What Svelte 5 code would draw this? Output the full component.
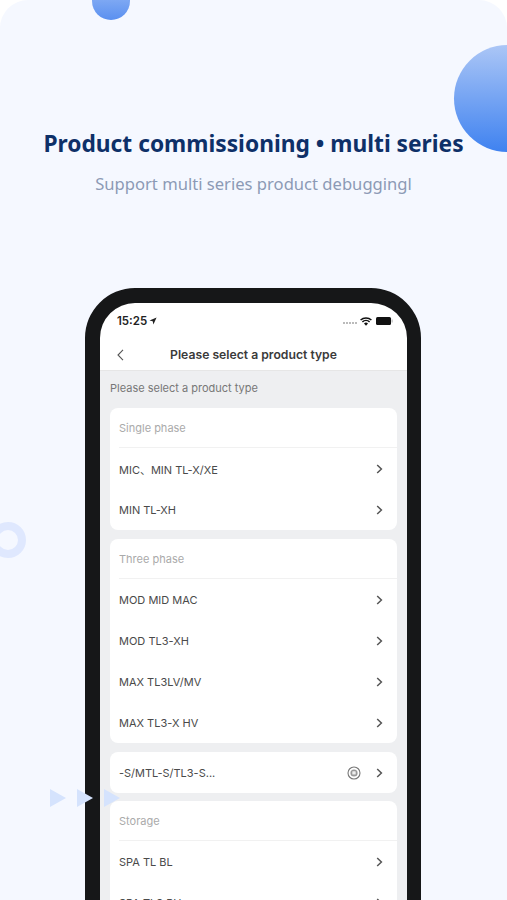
<script>
	const groups = [
		{ title: 'Single phase', items: ['MIC、MIN TL-X/XE', 'MIN TL-XH'] },
		{ title: 'Three phase', items: ['MOD MID MAC', 'MOD TL3-XH', 'MAX TL3LV/MV', 'MAX TL3-X HV'] },
		{ items: ['-S/MTL-S/TL3-S...'], badge: true },
		{ title: 'Storage', items: ['SPA TL BL', 'SPA TL3 BH'] }
	];
</script>

<div class="page">
	<span class="dot top"></span>
	<span class="dot right"></span>
	<span class="ring"></span>

	<header class="intro">
		<h1>Product commissioning • multi series</h1>
		<p>Support multi series product debuggingl</p>
	</header>

	<div class="phone">
		<div class="screen">
			<div class="status">
				<span class="time">15:25</span>
				<svg class="arrow" width="8" height="8" viewBox="0 0 8 8"><path d="M7.6.4 .5 3.6l3.2.7.7 3.3z" fill="#222"/></svg>
				<span class="signal"></span>
				<svg width="12" height="9" viewBox="0 0 12 9">
					<path d="M.6 3a8 8 0 0 1 10.8 0M2.4 4.9a5.4 5.4 0 0 1 7.2 0" fill="none" stroke="#111" stroke-width="1.5"/>
					<path d="M4 6.5a3 3 0 0 1 4 0L6 8.8z" fill="#111"/>
				</svg>
				<svg class="battery" width="17" height="8" viewBox="0 0 17 8">
					<rect width="15" height="8" rx="1.5" fill="#111"/>
					<rect x="15.5" y="2.5" width="1.2" height="3" fill="#bbb"/>
				</svg>
			</div>
			<nav class="bar">
				<svg class="back" width="7" height="12" viewBox="0 0 7 12"><path d="M6 .8 1 6l5 5.2" fill="none" stroke="#555" stroke-width="1.1"/></svg>
				<span>Please select a product type</span>
			</nav>
			<div class="content">
				<div class="hint">Please select a product type</div>
				{#each groups as group}
					<section class="card">
						{#if group.title}
							<div class="head">{group.title}</div>
						{/if}
						{#each group.items as item}
							<div class="row">
								<span class="name">{item}</span>
								{#if group.badge}
									<svg class="badge" width="14" height="14" viewBox="0 0 14 14">
										<circle cx="7" cy="7" r="6" fill="none" stroke="#777" stroke-width="1.1"/>
										<circle cx="7" cy="7" r="3.6" fill="#999"/>
										<rect x="5.3" y="5.2" width="3.4" height="3.4" rx=".6" fill="#eee"/>
									</svg>
								{/if}
								<svg width="7" height="10" viewBox="0 0 7 10"><path d="M1.2 1 5.4 5 1.2 9" fill="none" stroke="#555" stroke-width="1.5"/></svg>
							</div>
						{/each}
					</section>
				{/each}
			</div>
		</div>
	</div>

	<div class="arrows">
		<i></i><i></i><i></i>
	</div>
</div>

<style>
	:global(body) {
		background: #fff;
	}

	.page {
		position: relative;
		width: 507px;
		height: 900px;
		overflow: hidden;
		background: #f5f8ff;
		border-radius: 28px 28px 0 0;
		font-family: Inter, "Noto Sans CJK SC", sans-serif;
	}

	.dot {
		position: absolute;
		border-radius: 50%;
	}
	.dot.top {
		left: 92px;
		top: -18px;
		width: 38px;
		height: 38px;
		background: linear-gradient(#9dbdf6, #5a90f0);
	}
	.dot.right {
		left: 454px;
		top: 45px;
		width: 107px;
		height: 107px;
		background: linear-gradient(#abc6f6, #3f82f0);
	}
	.ring {
		position: absolute;
		left: -10px;
		top: 522px;
		width: 20px;
		height: 20px;
		border: 8px solid #dfe8fe;
		border-radius: 50%;
	}

	.intro {
		padding-top: 127px;
		text-align: center;
		white-space: nowrap;
	}
	h1 {
		margin: 0;
		font-family: "Noto Sans", sans-serif;
		font-size: 22.75px;
		line-height: 34px;
		font-weight: 700;
		color: #0e3068;
	}
	.intro p {
		margin: 12px 0 0;
		font-family: "Noto Sans", sans-serif;
		font-size: 16.6px;
		line-height: 22px;
		color: #8c9ab5;
	}

	.phone {
		box-sizing: border-box;
		width: 336px;
		height: 680px;
		margin: 93px 0 0 85px;
		border: 15px solid #161718;
		border-right-width: 14px;
		border-radius: 50px;
		background: #fff;
		overflow: hidden;
	}
	.screen {
		display: flex;
		flex-direction: column;
		height: 100%;
		color: #333;
	}
	.status {
		display: flex;
		align-items: center;
		height: 36px;
		padding: 0 14px 0 17px;
		flex: none;
	}
	.time {
		font-size: 11.5px;
		font-weight: 600;
		color: #222;
	}
	.arrow {
		margin-left: 2px;
	}
	.signal {
		width: 14px;
		height: 2px;
		margin: 3px 3px 0 auto;
		background: repeating-linear-gradient(90deg, #bbb 0 2px, transparent 2px 3px);
	}
	.battery {
		margin-left: 4px;
	}

	.bar {
		position: relative;
		display: flex;
		align-items: center;
		justify-content: center;
		height: 31px;
		flex: none;
		font-size: 12.2px;
		font-weight: 600;
		color: #3a3a3a;
		border-bottom: 1px solid #e6e6e6;
	}
	.back {
		position: absolute;
		left: 17px;
		top: 10px;
	}

	.content {
		flex: 1;
		padding: 0 10px;
		background: #eeeff1;
	}
	.hint {
		height: 37px;
		line-height: 35px;
		font-size: 11px;
		color: #777;
	}
	.card {
		margin-bottom: 9px;
		background: #fff;
		border-radius: 8px;
		padding-left: 9px;
	}
	.card:nth-of-type(3) {
		margin-bottom: 8px;
	}
	.head {
		height: 39px;
		line-height: 40px;
		font-size: 11px;
		color: #aaa;
		border-bottom: 1px solid #f1f1f1;
	}
	.row {
		display: flex;
		align-items: center;
		height: 41px;
		padding-right: 14px;
		font-size: 11px;
		color: #4a4a4a;
	}
	.name {
		flex: 1;
	}
	.badge {
		margin-right: 15px;
	}

	.arrows {
		position: absolute;
		left: 50px;
		top: 789px;
		display: flex;
		gap: 11px;
	}
	.arrows i {
		width: 0;
		height: 0;
		border-style: solid;
		border-width: 9.5px 0 9.5px 16px;
		border-color: transparent transparent transparent #d5e3fd;
	}
</style>
